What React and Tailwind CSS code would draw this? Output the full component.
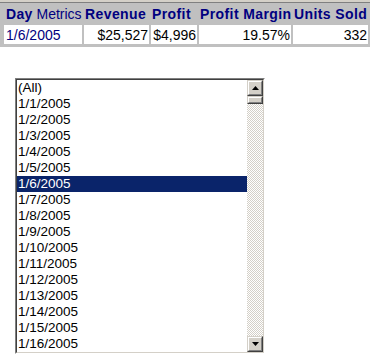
import React from 'react';

const dates = ['(All)'];
for (let i = 1; i <= 16; i++) dates.push(`1/${i}/2005`);

const headers = ['Revenue', 'Profit', 'Profit Margin', 'Units Sold'];
const values = ['$25,527', '$4,996', '19.57%', '332'];

const Raised = ({ className, children }) => (
  <div className={`border border-t-[#d4d0c8] border-l-[#d4d0c8] border-b-[#404040] border-r-[#404040] ${className}`}>
    <div className="w-full h-full bg-[#d4d0c8] border border-t-white border-l-white border-b-[#808080] border-r-[#808080] flex items-center justify-center">
      {children}
    </div>
  </div>
);

const Arrow = ({ down }) => (
  <svg width="7" height="4" viewBox="0 0 7 4" className="block">
    {down ? <polygon points="0,0 7,0 3.5,4" fill="#000" /> : <polygon points="0,4 7,4 3.5,0" fill="#000" />}
  </svg>
);

const MetricsTable = () => (
  <div>
    <div className="h-[2px] bg-[#d4d0c8]" />
    <div
      className="grid grid-cols-[78px_65px_46px_92px_75px] gap-x-[2px] gap-y-[1px] bg-[#c0c0c0] border-t border-[#808080] pl-[4px] pr-[2px] pb-[3px] text-[14px] leading-[14px] whitespace-nowrap"
      style={{ fontFamily: '"Liberation Sans", Arial, sans-serif' }}
    >
      <div className="h-[21px] pt-[4px] pl-[2px] text-[#000080]">
        <span className="font-bold tracking-[0.3px]">Day</span> <span>Metrics</span>
      </div>
      {headers.map((h) => (
        <div key={h} className="h-[21px] pt-[4px] pl-[1px] font-bold tracking-[0.4px] text-[#000080]">{h}</div>
      ))}
      <div className="h-[19px] pt-[3px] pl-[2px] bg-white text-[#000080]">1/6/2005</div>
      {values.map((v) => (
        <div key={v} className="h-[19px] pt-[3px] pr-[1px] bg-white text-right text-black">{v}</div>
      ))}
    </div>
  </div>
);

const DateList = () => (
  <div className="ml-[15px] mt-[31px] w-[250px] h-[276px] border border-t-[#808080] border-l-[#808080] border-b-white border-r-white">
    <div className="w-full h-full flex border border-t-[#404040] border-l-[#404040] border-b-[#d4d0c8] border-r-[#d4d0c8] bg-white">
      <div
        className="flex-1 overflow-hidden text-[13.5px] leading-[16px]"
        style={{ fontFamily: '"Liberation Sans", Arial, sans-serif' }}
      >
        {dates.map((d) => (
          <div
            key={d}
            className={`h-[16px] pl-[1px] ${d === '1/6/2005' ? 'bg-[#0a246a] text-white' : 'text-black'}`}
          >
            {d}
          </div>
        ))}
      </div>
      <div className="w-[16px] flex flex-col">
        <Raised className="h-[16px]"><Arrow /></Raised>
        <Raised className="h-[8px]" />
        <div className="flex-1 bg-[image:repeating-conic-gradient(#d4d0c8_0%_25%,#ffffff_0%_50%)] bg-size-[2px_2px]" />
        <Raised className="h-[16px]"><Arrow down /></Raised>
      </div>
    </div>
  </div>
);

export default function App() {
  return (
    <div className="w-[370px] h-[359px] bg-white overflow-hidden">
      <MetricsTable />
      <DateList />
    </div>
  );
}
